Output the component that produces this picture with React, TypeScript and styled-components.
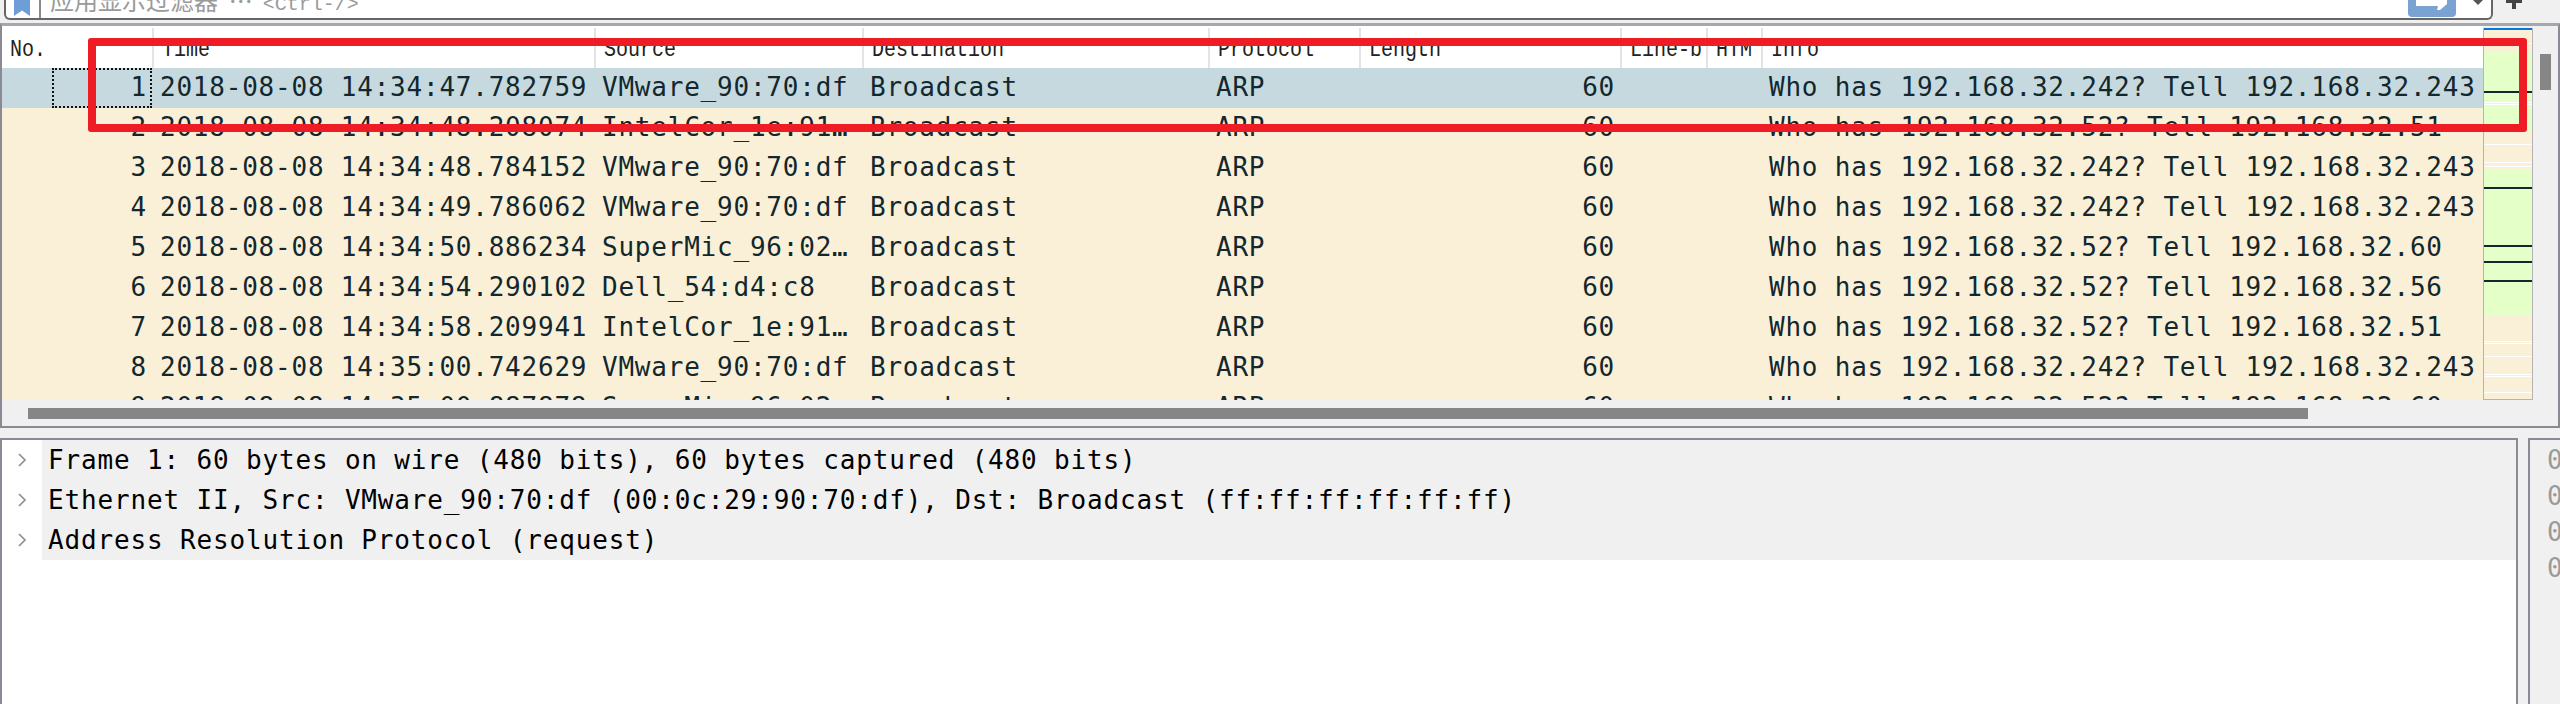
import styled, { createGlobalStyle } from "styled-components";

const GlobalStyle = createGlobalStyle`
  html, body {
    margin: 0;
    padding: 0;
    background: #f0f0f0;
  }
  * {
    box-sizing: border-box;
  }
`;

const columns = "151px 442px 268px 346px 151px 261px 86px 55px 1fr";

const headers = [
  "No.",
  "Time",
  "Source",
  "Destination",
  "Protocol",
  "Length",
  "Line-b",
  "HTM",
  "Info",
];

const vm = "VMware_90:70:df";
const intel = "IntelCor_1e:91…";
const superMic = "SuperMic_96:02…";
const who242 = "Who has 192.168.32.242? Tell 192.168.32.243";

const packets = [
  { time: "14:34:47.782759", src: vm, info: who242 },
  { time: "14:34:48.208074", src: intel, info: "Who has 192.168.32.52? Tell 192.168.32.51" },
  { time: "14:34:48.784152", src: vm, info: who242 },
  { time: "14:34:49.786062", src: vm, info: who242 },
  { time: "14:34:50.886234", src: superMic, info: "Who has 192.168.32.52? Tell 192.168.32.60" },
  { time: "14:34:54.290102", src: "Dell_54:d4:c8", info: "Who has 192.168.32.52? Tell 192.168.32.56" },
  { time: "14:34:58.209941", src: intel, info: "Who has 192.168.32.52? Tell 192.168.32.51" },
  { time: "14:35:00.742629", src: vm, info: who242 },
  { time: "14:35:00.887878", src: superMic, info: "Who has 192.168.32.52? Tell 192.168.32.60" },
];

const details = [
  "Frame 1: 60 bytes on wire (480 bits), 60 bytes captured (480 bits)",
  "Ethernet II, Src: VMware_90:70:df (00:0c:29:90:70:df), Dst: Broadcast (ff:ff:ff:ff:ff:ff)",
  "Address Resolution Protocol (request)",
];

const App = () => {
  return (
    <Page>
      <GlobalStyle />
      <TopBar>
        <FilterBox>
          <BookmarkCell>
            <svg width="16" height="16" viewBox="0 0 16 16">
              <path d="M0 0H16V16L8 10.5L0 16Z" fill="#6f9dd6" />
            </svg>
          </BookmarkCell>
          <FilterText>
            应用显示过滤器  …<FilterHint>&lt;Ctrl-/&gt;</FilterHint>
          </FilterText>
          <ApplyButton>
            <svg width="48" height="17" viewBox="0 0 48 17">
              <path d="M0 -6H48V13A4 4 0 0 1 44 17H4A4 4 0 0 1 0 13Z" fill="#7aa3d3" />
              <path d="M8 -2H39V4L32 10H29L30 6H8Z" fill="#fff" />
            </svg>
          </ApplyButton>
          <DropDown>
            <svg width="10" height="5" viewBox="0 0 10 5">
              <path d="M0 0H10L5 5Z" fill="#555" />
            </svg>
          </DropDown>
        </FilterBox>
        <PlusIcon>
          <svg width="16" height="9" viewBox="0 0 16 9">
            <path d="M0 0H16V3H10V9H6V3H0Z" fill="#444" />
          </svg>
        </PlusIcon>
      </TopBar>

      <PacketPane>
        <ListArea>
          <HeaderRow>
            {headers.map((h) => (
              <HeaderCell key={h}>
                <HeaderLabel>{h}</HeaderLabel>
              </HeaderCell>
            ))}
          </HeaderRow>
          {packets.map((p, i) => (
            <PacketRow key={i} selected={i === 0}>
              <NumCell focused={i === 0}>{i + 1}</NumCell>
              <Cell>2018-08-08 {p.time}</Cell>
              <Cell>{p.src}</Cell>
              <Cell>Broadcast</Cell>
              <Cell>ARP</Cell>
              <LengthCell>60</LengthCell>
              <Cell />
              <Cell />
              <Cell>{p.info}</Cell>
            </PacketRow>
          ))}
        </ListArea>
        <MiniMap>
          <svg width="48" height="371" viewBox="0 0 48 371">
            <rect width="48" height="371" fill="#faf0d7" />
            <rect y="0" width="48" height="2" fill="#0078d7" />
            <rect y="23" width="48" height="81" fill="#e4ffc7" />
            <rect y="141" width="48" height="146" fill="#e4ffc7" />
            <rect y="63" width="48" height="2" fill="#12272e" />
            <rect y="159" width="48" height="2" fill="#12272e" />
            <rect y="217" width="48" height="2" fill="#12272e" />
            <rect y="233" width="48" height="2" fill="#12272e" />
            <rect y="252" width="48" height="2" fill="#12272e" />
            {[15, 74, 76, 116, 134, 138, 313, 315, 328, 346, 348, 364].map((y) => (
              <rect key={y} y={y} width="48" height="1" fill="#fff" />
            ))}
          </svg>
        </MiniMap>
        <VScroll>
          <VThumb />
        </VScroll>
        <HScroll>
          <HThumb />
        </HScroll>
      </PacketPane>

      <BottomPanes>
        <DetailPane>
          {details.map((d) => (
            <DetailRow key={d}>
              <Chevron>
                <svg width="9" height="14" viewBox="0 0 9 14">
                  <path d="M1 1L7 7L1 13" fill="none" stroke="#8c8c8c" strokeWidth="1.6" />
                </svg>
              </Chevron>
              <DetailText>{d}</DetailText>
            </DetailRow>
          ))}
        </DetailPane>
        <BytesPane>
          {["0000", "0010", "0020", "0030"].map((o) => (
            <ByteLine key={o}>{o}</ByteLine>
          ))}
        </BytesPane>
      </BottomPanes>

      <RedMark />
    </Page>
  );
};

export default App;

const Page = styled.div`
  position: relative;
  width: 2560px;
  height: 704px;
  overflow: hidden;
  background: #f0f0f0;
  display: flex;
  flex-direction: column;
`;

const TopBar = styled.div`
  display: flex;
  align-items: flex-start;
  height: 23px;
  flex: none;
  padding-left: 4px;
`;

const FilterBox = styled.div`
  display: flex;
  align-items: flex-end;
  width: 2489px;
  height: 20px;
  overflow: hidden;
  background: #fff;
  border: 2px solid #666;
  border-top: none;
  border-radius: 0 0 6px 6px;
`;

const BookmarkCell = styled.div`
  flex: none;
  width: 35px;
  height: 18px;
  padding: 0 0 0 8px;
  border-right: 2px solid #8a8a8a;
`;

const FilterText = styled.div`
  flex: 1;
  margin: 0 0 0 9px;
  font-family: "Noto Sans CJK SC", sans-serif;
  font-size: 24px;
  line-height: 26px;
  color: #9a9a9a;
  white-space: pre;
`;

const FilterHint = styled.span`
  margin-left: 10px;
  font-family: "Liberation Mono", monospace;
  font-size: 20px;
`;

const ApplyButton = styled.div`
  flex: none;
  display: flex;
  margin-bottom: 1px;
`;

const DropDown = styled.div`
  flex: none;
  display: flex;
  align-self: flex-start;
  width: 35px;
  padding-left: 17px;
`;

const PlusIcon = styled.div`
  flex: none;
  display: flex;
  margin-left: 13px;
`;

const PacketPane = styled.div`
  flex: none;
  display: grid;
  grid-template-columns: 2481px 50px 1fr;
  grid-template-rows: 374px 1fr;
  height: 405px;
  background: #f0f0f0;
  border: 2px solid #8a8a94;
  border-top: 3px solid #a6a6ae;
`;

const ListArea = styled.div`
  overflow: hidden;
  padding-top: 2px;
  background: #fff;
`;

const HeaderRow = styled.div`
  display: grid;
  grid-template-columns: ${columns};
  height: 40px;
`;

const HeaderCell = styled.div`
  padding-left: 9px;
  border-right: 1px solid #e3e3e3;
  box-shadow: 1px 0 0 #e3e3e3;
  overflow: hidden;
  white-space: nowrap;

  &:first-child {
    padding-left: 8px;
  }

  &:last-child {
    border-right: none;
    box-shadow: none;
  }
`;

const HeaderLabel = styled.span`
  display: inline-block;
  font-family: "Liberation Mono", monospace;
  font-size: 20px;
  line-height: 43px;
  color: #222;
  transform: scaleY(1.15);
`;

const PacketRow = styled.div<{ selected: boolean }>`
  display: grid;
  grid-template-columns: ${columns};
  height: 40px;
  background: ${(p) => (p.selected ? "#c6d9de" : "#faf0d7")};
`;

const Cell = styled.div`
  padding-left: 7px;
  font-family: "DejaVu Sans Mono", monospace;
  font-size: 26px;
  letter-spacing: 0.78px;
  line-height: 38px;
  color: #12272e;
  white-space: nowrap;
  overflow: hidden;
`;

const NumCell = styled(Cell)<{ focused: boolean }>`
  position: relative;
  text-align: right;
  padding: 0 6px 0 0;

  &::before {
    content: "";
    display: ${(p) => (p.focused ? "block" : "none")};
    position: absolute;
    left: 50px;
    top: 0;
    right: 1px;
    bottom: 0;
    border: 2px dotted #111;
  }
`;

const LengthCell = styled(Cell)`
  text-align: right;
  padding: 0 6px 0 0;
`;

const MiniMap = styled.div`
  display: flex;
  margin-top: 2px;
  height: 372px;
  border: 1px solid #b4b4b4;
  border-top: none;
  overflow: hidden;
`;

const VScroll = styled.div`
  padding: 28px 7px 0 7px;
`;

const VThumb = styled.div`
  height: 36px;
  background: #868686;
`;

const HScroll = styled.div`
  grid-column: 1 / -1;
  padding: 8px 0 0 26px;
`;

const HThumb = styled.div`
  width: 2280px;
  height: 11px;
  background: #868686;
`;

const BottomPanes = styled.div`
  flex: 1;
  display: flex;
  gap: 10px;
  margin-top: 10px;
  min-height: 0;
`;

const DetailPane = styled.div`
  flex: none;
  width: 2518px;
  background: #fff;
  border: 2px solid #8a8a94;
  border-bottom: none;
`;

const DetailRow = styled.div`
  display: flex;
  height: 40px;
`;

const Chevron = styled.div`
  flex: none;
  display: flex;
  align-items: center;
  width: 40px;
  padding-left: 16px;
`;

const DetailText = styled.div`
  flex: 1;
  padding-left: 6px;
  background: #f0f0f0;
  font-family: "DejaVu Sans Mono", monospace;
  font-size: 26px;
  letter-spacing: 0.84px;
  line-height: 40px;
  color: #000;
  white-space: pre;
`;

const BytesPane = styled.div`
  flex: 1;
  min-width: 0;
  overflow: hidden;
  padding: 2px 0 0 17px;
  border: 2px solid #8a8a94;
  border-right: none;
  border-bottom: none;
`;

const ByteLine = styled.div`
  height: 36px;
  font-family: "DejaVu Sans Mono", monospace;
  font-size: 26px;
  line-height: 36px;
  color: #9a9a9a;
`;

const RedMark = styled.div`
  position: absolute;
  left: 88px;
  top: 38px;
  width: 2439px;
  height: 94px;
  border: 8px solid #ee1c25;
  border-radius: 3px;
`;
